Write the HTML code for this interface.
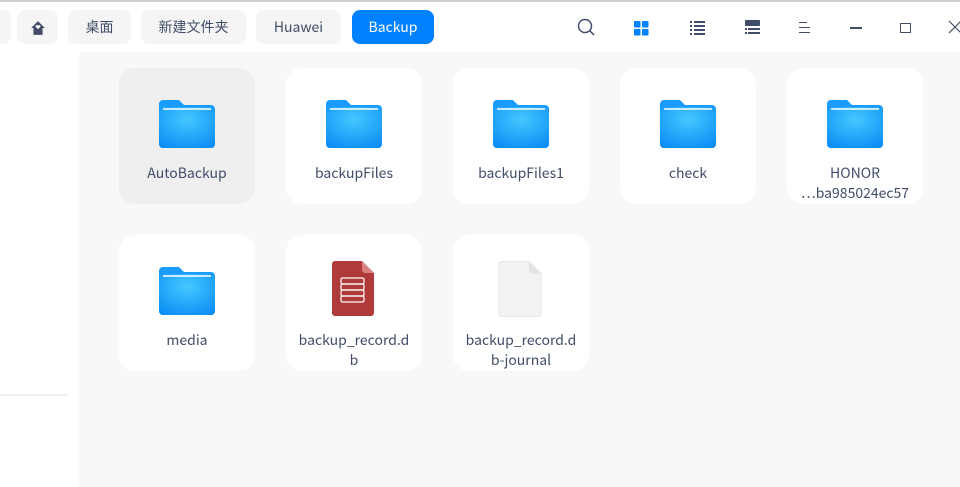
<!DOCTYPE html><html><head><meta charset="utf-8"><style>
*{margin:0;padding:0;box-sizing:border-box}
body{width:960px;height:487px;overflow:hidden;background:#f8f8f8;font-family:"Liberation Sans","Noto Sans CJK SC",sans-serif;position:relative;color:#414d68}
.top{position:absolute;left:0;top:0;width:960px;height:2px;background:#cfcfcf}
.hdr{position:absolute;left:0;top:2px;width:960px;height:50px;background:#fff}
.side{position:absolute;left:0;top:52px;width:79px;height:435px;background:#fff}
.sep{position:absolute;left:0;top:394px;width:68px;height:2px;background:#f1f1f1}
.b{position:absolute;top:10px;height:34px;border-radius:8px;background:#f5f5f5;font-size:14px;line-height:35px;text-align:center;color:#414d68;font-family:"Noto Sans CJK SC","Liberation Sans",sans-serif}
.card{position:absolute;width:136px;height:136px;border-radius:16px;background:#fff;text-align:center;font-size:14px;color:#414d68;font-family:"Noto Sans CJK SC","Liberation Sans",sans-serif;line-height:20px}
.card.sel{background:#efefef}
.card svg{position:absolute;left:40px;top:30px}
.card .t{position:absolute;left:6px;right:6px;top:95px}
.ic{position:absolute}
</style></head><body>
<div class="top"></div><div class="hdr"></div>
<div class="b" style="left:-10px;width:21px"></div>
<div class="b" style="left:17px;width:41px"><svg width="16" height="16" viewBox="0 0 14 14" style="margin-top:10px"><path d="M7 1L13 7H11V13H3V7H1Z" fill="#414d68"/><path d="M7 8l-2-2a1 1 0 0 1 2-1 1 1 0 0 1 2 1z" fill="#fff"/></svg></div>
<div class="b" style="left:68px;width:63px">桌面</div>
<div class="b" style="left:141px;width:105px">新建文件夹</div>
<div class="b" style="left:256px;width:85px">Huawei</div>
<div class="b" style="left:352px;width:82px;background:#0081ff;color:#fff">Backup</div>
<svg class="ic" style="left:577px;top:18px" width="18" height="18"><circle cx="8" cy="8" r="6.5" stroke="#414d68" stroke-width="1.5" fill="none"/><path d="M12.5 12.5L17 17" stroke="#414d68" stroke-width="1.5"/></svg>
<svg class="ic" style="left:634px;top:21px" width="15" height="15"><rect x="0" y="0" width="6.5" height="6.5" rx="1" fill="#0081ff"/><rect x="8" y="0" width="6.5" height="6.5" rx="1" fill="#0081ff"/><rect x="0" y="8" width="6.5" height="6.5" rx="1" fill="#0081ff"/><rect x="8" y="8" width="6.5" height="6.5" rx="1" fill="#0081ff"/></svg>
<svg class="ic" style="left:690px;top:21px" width="15" height="14" fill="#414d68"><rect x="0" y="0" width="2" height="2"/><rect x="4" y="0" width="11" height="2"/><rect x="0" y="4" width="2" height="2"/><rect x="4" y="4" width="11" height="2"/><rect x="0" y="8" width="2" height="2"/><rect x="4" y="8" width="11" height="2"/><rect x="0" y="12" width="2" height="2"/><rect x="4" y="12" width="11" height="2"/></svg>
<svg class="ic" style="left:745px;top:20px" width="15" height="15" fill="#414d68"><rect x="0" y="0" width="15" height="6" rx="1"/><rect x="0" y="8" width="2" height="2"/><rect x="3" y="8" width="12" height="2"/><rect x="0" y="12" width="2" height="2"/><rect x="3" y="12" width="12" height="2"/></svg>
<svg class="ic" style="left:799px;top:22px" width="12" height="12" fill="#414d68"><rect x="0" y="0" width="8" height="1"/><rect x="0" y="5" width="11" height="1"/><rect x="0" y="10" width="11" height="1"/></svg>
<div class="ic" style="left:850px;top:27px;width:12px;height:1.5px;background:#414d68"></div>
<div class="ic" style="left:900px;top:23px;width:11px;height:10px;border:1.3px solid #414d68"></div>
<svg class="ic" style="left:948px;top:20px" width="14" height="14"><path d="M1 1L13 13M13 1L1 13" stroke="#414d68" stroke-width="1.2"/></svg>
<div class="side"></div><div class="sep"></div>
<svg width="0" height="0" style="position:absolute"><defs><radialGradient id="fg" cx="0.5" cy="0.3" r="0.8"><stop offset="0" stop-color="#45c8ff"/><stop offset="1" stop-color="#0a8cf5"/></radialGradient></defs></svg>
<div class="card sel" style="left:119px;top:68px"><svg width="56" height="50"><path d="M4 2h16l5 5h27a4 4 0 0 1 4 4v35a4 4 0 0 1-4 4H4a4 4 0 0 1-4-4V6a4 4 0 0 1 4-4z" fill="#1a9cff"/><path d="M4 9h48a4 4 0 0 1 4 4v33a4 4 0 0 1-4 4H4a4 4 0 0 1-4-4V13a4 4 0 0 1 4-4z" fill="url(#fg)"/><path d="M4 11h48" stroke="#fff" stroke-width="1.5"/></svg><div class="t">AutoBackup</div></div>
<div class="card" style="left:286px;top:68px"><svg width="56" height="50"><path d="M4 2h16l5 5h27a4 4 0 0 1 4 4v35a4 4 0 0 1-4 4H4a4 4 0 0 1-4-4V6a4 4 0 0 1 4-4z" fill="#1a9cff"/><path d="M4 9h48a4 4 0 0 1 4 4v33a4 4 0 0 1-4 4H4a4 4 0 0 1-4-4V13a4 4 0 0 1 4-4z" fill="url(#fg)"/><path d="M4 11h48" stroke="#fff" stroke-width="1.5"/></svg><div class="t">backupFiles</div></div>
<div class="card" style="left:453px;top:68px"><svg width="56" height="50"><path d="M4 2h16l5 5h27a4 4 0 0 1 4 4v35a4 4 0 0 1-4 4H4a4 4 0 0 1-4-4V6a4 4 0 0 1 4-4z" fill="#1a9cff"/><path d="M4 9h48a4 4 0 0 1 4 4v33a4 4 0 0 1-4 4H4a4 4 0 0 1-4-4V13a4 4 0 0 1 4-4z" fill="url(#fg)"/><path d="M4 11h48" stroke="#fff" stroke-width="1.5"/></svg><div class="t">backupFiles1</div></div>
<div class="card" style="left:620px;top:68px"><svg width="56" height="50"><path d="M4 2h16l5 5h27a4 4 0 0 1 4 4v35a4 4 0 0 1-4 4H4a4 4 0 0 1-4-4V6a4 4 0 0 1 4-4z" fill="#1a9cff"/><path d="M4 9h48a4 4 0 0 1 4 4v33a4 4 0 0 1-4 4H4a4 4 0 0 1-4-4V13a4 4 0 0 1 4-4z" fill="url(#fg)"/><path d="M4 11h48" stroke="#fff" stroke-width="1.5"/></svg><div class="t">check</div></div>
<div class="card" style="left:787px;top:68px"><svg width="56" height="50"><path d="M4 2h16l5 5h27a4 4 0 0 1 4 4v35a4 4 0 0 1-4 4H4a4 4 0 0 1-4-4V6a4 4 0 0 1 4-4z" fill="#1a9cff"/><path d="M4 9h48a4 4 0 0 1 4 4v33a4 4 0 0 1-4 4H4a4 4 0 0 1-4-4V13a4 4 0 0 1 4-4z" fill="url(#fg)"/><path d="M4 11h48" stroke="#fff" stroke-width="1.5"/></svg><div class="t">HONOR<br>…ba985024ec57</div></div>
<div class="card" style="left:119px;top:235px"><svg width="56" height="50"><path d="M4 2h16l5 5h27a4 4 0 0 1 4 4v35a4 4 0 0 1-4 4H4a4 4 0 0 1-4-4V6a4 4 0 0 1 4-4z" fill="#1a9cff"/><path d="M4 9h48a4 4 0 0 1 4 4v33a4 4 0 0 1-4 4H4a4 4 0 0 1-4-4V13a4 4 0 0 1 4-4z" fill="url(#fg)"/><path d="M4 11h48" stroke="#fff" stroke-width="1.5"/></svg><div class="t">media</div></div>
<div class="card" style="left:286px;top:235px"><svg width="56" height="56" style="left:45px;top:26px"><path d="M4 0h27l12 12v40a3 3 0 0 1-3 3H4a3 3 0 0 1-3-3V3a3 3 0 0 1 3-3z" fill="#b03a3a"/><path d="M31 0l12 12H34a3 3 0 0 1-3-3z" fill="#d98080"/><g stroke="#fff" stroke-width="1.2" fill="none"><rect x="10" y="17" width="23" height="6" rx="1.5"/><rect x="10" y="23" width="23" height="6" rx="1.5"/><rect x="10" y="29" width="23" height="6" rx="1.5"/><rect x="10" y="35" width="23" height="6" rx="1.5"/></g></svg><div class="t">backup_record.d<br>b</div></div>
<div class="card" style="left:453px;top:235px"><svg width="56" height="56" style="left:45px;top:26px"><path d="M4 0.5h27l12 12v40a3 3 0 0 1-3 3H4a3 3 0 0 1-3-3V3.5a3 3 0 0 1 3-3z" fill="#f3f3f3" stroke="#e6e6e6"/><path d="M31 0.5l12 12H34a3 3 0 0 1-3-3z" fill="#e4e4e4"/></svg><div class="t">backup_record.d<br>b-journal</div></div>
</body></html>
